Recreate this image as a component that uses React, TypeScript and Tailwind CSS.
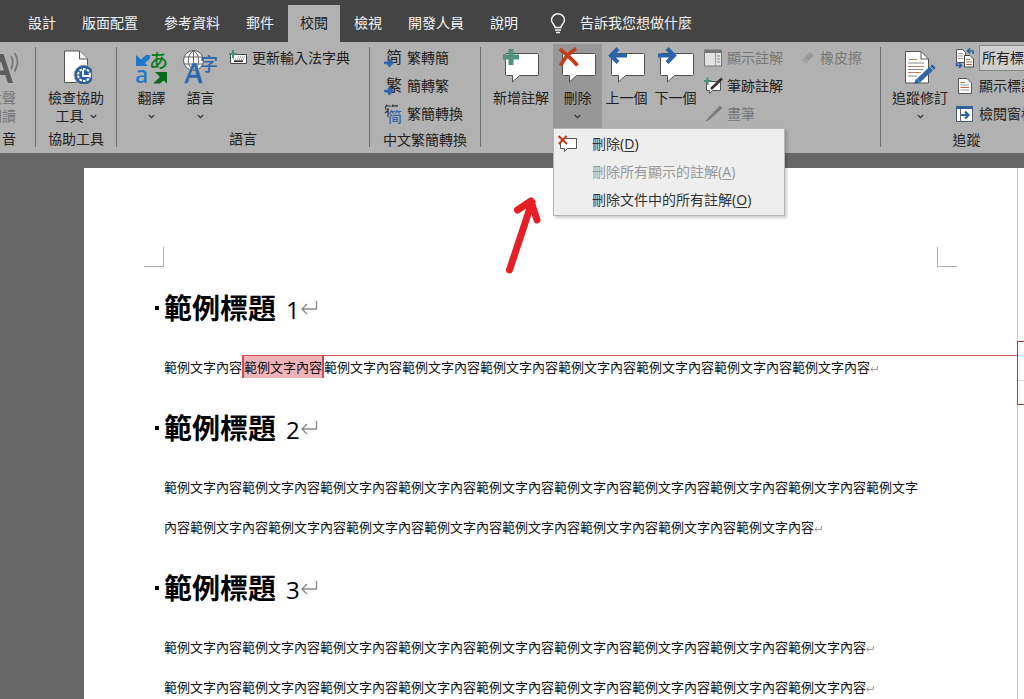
import type { ReactNode } from "react";

const UI_FONT = "font-['Noto_Sans','Noto_Sans_CJK_TC',sans-serif]";

const tabs = ["設計", "版面配置", "參考資料", "郵件", "校閱", "檢視", "開發人員", "說明"];
const activeTab = "校閱";

const sample = "範例文字內容";

/* ---------- icons ---------- */

function Chevron() {
  return (
    <svg width="7" height="5" viewBox="0 0 7 5" fill="none" stroke="#333" strokeWidth="1.2" aria-hidden="true">
      <path d="M0.8 1 L3.5 3.6 L6.2 1" />
    </svg>
  );
}

function ReadAloudIcon() {
  return (
    <svg width="40" height="38" viewBox="0 0 40 38" fill="none" aria-hidden="true">
      <path d="M6 37 L17 8 H21.5 L31 37 H26 L23.2 29 H13.5 L10.8 37 Z M15 24.6 H21.8 L19 15 Z" fill="#5e5e5e" fillRule="evenodd" />
      <path d="M29 10 Q32.5 16 29 23 M32.5 7 Q38.5 15.5 32.5 25.5" stroke="#777" strokeWidth="1.7" />
    </svg>
  );
}

function AccessibilityIcon() {
  return (
    <svg width="32" height="38" viewBox="0 0 32 38" fill="none" aria-hidden="true">
      <path d="M4.5 5 H19.5 L27.5 13 V36.5 H4.5 Z" fill="#fff" stroke="#555" />
      <path d="M19.5 5 V13 H27.5" fill="#eee" stroke="#555" />
      <circle cx="24" cy="29" r="10" fill="#2f5f9b" stroke="#b0b0b0" strokeWidth="0.8" />
      <circle cx="24" cy="29" r="6" stroke="#fff" strokeWidth="2" strokeDasharray="2.6 1.2" />
      <path d="M23 24 V30 H29" stroke="#fff" strokeWidth="1.8" />
    </svg>
  );
}

function TranslateIcon() {
  return (
    <svg width="34" height="38" viewBox="0 0 34 38" aria-hidden="true">
      <path d="M1 9 V20 H13 L10 17 L15 12.5 V9 H11 L6 13.5 Z" fill="#1f78c8" />
      <text x="14" y="22" fontSize="19" fontWeight="500" fill="#0b7a1e" fontFamily="Noto Sans CJK JP">あ</text>
      <text x="0" y="37" fontSize="23" fontWeight="500" fill="#1f78c8" fontFamily="Noto Sans">a</text>
      <path d="M20 26 H32 V37.5 L28.5 34.5 L25 37.5 H18 L25 31 Z" fill="#0b6b1a" />
    </svg>
  );
}

function LanguageIcon() {
  return (
    <svg width="36" height="38" viewBox="0 0 36 38" aria-hidden="true">
      <circle cx="10.5" cy="14.5" r="10" fill="#fff" stroke="#555" />
      <path d="M10.5 4.5 V24.5 M1 11 H20 M1 18 H20 M10.5 4.5 C3.5 9 3.5 20 10.5 24.5 M10.5 4.5 C17.5 9 17.5 20 10.5 24.5" fill="none" stroke="#555" strokeWidth="0.9" />
      <path d="M1 37.5 L9.4 17 H13.6 L20 37.5 H15.7 L14.1 32 H6.7 L4.9 37.5 Z M7.9 28.4 H12.9 L11 21 Z" fill="#2f66ad" stroke="#b0b0b0" strokeWidth="0.5" fillRule="evenodd" />
      <text x="17" y="25" fontSize="18" fontWeight="500" fill="#2f66ad" fontFamily="Noto Sans CJK TC">字</text>
    </svg>
  );
}

function DictionaryIcon() {
  return (
    <svg width="19" height="16" viewBox="0 0 19 16" fill="none" aria-hidden="true">
      <path d="M1.5 4.5 H17.5 V13.5 H1.5 Z" fill="#fff" stroke="#444" />
      <path d="M9 7 H16 M4 9 H16" stroke="#777" strokeDasharray="1 1" />
      <path d="M5 11.2 H14" stroke="#222" strokeWidth="1.6" />
      <path d="M4 0 V8 M0 4 H8" stroke="#4a8d72" strokeWidth="2" />
    </svg>
  );
}

function ConvertIcon({ glyph }: { glyph: string }) {
  return (
    <svg width="19" height="20" viewBox="0 0 19 20" aria-hidden="true">
      <text x="2" y="15" fontSize="16" fill="#222" fontFamily="Noto Sans CJK SC">{glyph}</text>
      <path d="M0 15 H7 M4.5 11.5 L8 15 L4.5 18.5" fill="none" stroke="#2f66ad" strokeWidth="2.6" />
    </svg>
  );
}

function ConvertBothIcon() {
  return (
    <svg width="19" height="20" viewBox="0 0 19 20" aria-hidden="true">
      <path d="M3 0.5 L1 4 M2 2 H7 M4 4.5 V13 M1 5 H5 M1 9 L4 6.5 M9 0.5 L8 3 M9 1.8 H14" fill="none" stroke="#333" strokeWidth="1.2" />
      <text x="4" y="18" fontSize="14" fontWeight="500" fill="#2f66ad" fontFamily="Noto Sans CJK SC">简</text>
    </svg>
  );
}

function CommentIcon({ children }: { children: ReactNode }) {
  return (
    <svg width="38" height="38" viewBox="0 0 38 38" fill="none" aria-hidden="true">
      <path d="M5 7.5 H35.5 Q36.5 7.5 36.5 8.5 V28.5 Q36.5 29.5 35.5 29.5 H17.5 L10.5 36 V29.5 H4.5 Q3.5 29.5 3.5 28.5 V8.5 Q3.5 7.5 5 7.5 Z" fill="#fff" stroke="#505050" />
      {children}
    </svg>
  );
}

function SmallDeleteIcon() {
  return (
    <svg width="20" height="18" viewBox="0 0 20 18" fill="none" aria-hidden="true">
      <path d="M6 3.5 H18.5 V13.5 H9.5 L6.5 16.5 V13.5 H2.5 V8" fill="#fff" stroke="#555" />
      <path d="M0.5 1 L9 9 M8.5 1 L0.8 9" stroke="#c43a1e" strokeWidth="2" />
    </svg>
  );
}

function ShowCommentsIcon() {
  return (
    <svg width="19" height="18" viewBox="0 0 19 18" fill="none" aria-hidden="true">
      <path d="M0.5 1 H17.5 V17 H0.5 Z" fill="#e2e2e2" stroke="#777" />
      <path d="M0.5 2.5 H17.5" stroke="#777" strokeWidth="3" />
      <path d="M11.5 4 V17" stroke="#999" />
      <path d="M13 7 H16 M13 10 H16 M13 13 H16" stroke="#888" />
    </svg>
  );
}

function InkCommentIcon() {
  return (
    <svg width="19" height="18" viewBox="0 0 19 18" fill="none" aria-hidden="true">
      <path d="M2.5 4.5 H16.5 V13.5 H8.5 L5.5 16.5 V13.5 H2.5 Z" fill="#fff" stroke="#555" />
      <path d="M3.5 0.5 V8 M0 4 H7.5" stroke="#4a8d72" strokeWidth="2" />
      <path d="M7 12 L18 1.5" stroke="#333" strokeWidth="2.6" />
    </svg>
  );
}

function PenIcon() {
  return (
    <svg width="19" height="18" viewBox="0 0 19 18" fill="none" aria-hidden="true">
      <path d="M2 16 L5 12.5 L16 1 L18 3 L6.5 13.5 Z" fill="#7c7c7c" stroke="#7c7c7c" />
    </svg>
  );
}

function EraserIcon() {
  return (
    <svg width="15" height="16" viewBox="0 0 15 16" aria-hidden="true">
      <path d="M1 10 L9 2 L13 5.5 L5 13.5 Z" fill="#989898" />
      <path d="M1 10 L3.5 7.5 L7.5 11 L5 13.5 Z" fill="#a4a4a4" />
    </svg>
  );
}

function TrackIcon() {
  return (
    <svg width="32" height="38" viewBox="0 0 32 38" fill="none" aria-hidden="true">
      <path d="M1.5 5.5 H17 L24.5 13 V37 H1.5 Z" fill="#fff" stroke="#555" />
      <path d="M17 5.5 V13 H24.5" stroke="#555" />
      <path d="M5 13.5 H13 M4 20.5 H20 M4 26.5 H17" stroke="#c27c66" />
      <path d="M4 17 H20 M4 23.5 H19 M4 30 H13" stroke="#888" />
      <path d="M14.5 34.5 L30 20" stroke="#2f66a5" strokeWidth="5" />
      <path d="M26 20.5 L29.5 24.5" stroke="#bcd" />
      <path d="M12 32.5 L10 38 L16.5 36.5 Z" fill="#2f66a5" />
    </svg>
  );
}

function MarkupModeIcon() {
  return (
    <svg width="20" height="20" viewBox="0 0 20 20" fill="none" aria-hidden="true">
      <path d="M1.5 1.5 H7.5 L10.5 4.5 V14.5 H1.5 Z" fill="#fff" stroke="#555" />
      <path d="M3 5.5 H8 M3 8 H8 M3 10.5 H8" stroke="#999" />
      <path d="M9.5 7.5 H15 L18.5 11 V19 H9.5 Z" fill="#fff" stroke="#444" />
      <path d="M11 11.5 H15 M11 14 H17 M11 16.5 H17" stroke="#c4603e" />
      <path d="M18 6 V3 H13 M15 0.5 L12.5 3 L15 5.5 M1.5 15 V17.5 H6 M4 15 L6.5 17.5 L4 20" stroke="#2f5fa0" strokeWidth="1.6" />
    </svg>
  );
}

function ShowMarkupIcon() {
  return (
    <svg width="20" height="18" viewBox="0 0 20 18" fill="none" aria-hidden="true">
      <path d="M3.5 1.5 H12 L16.5 6 V16.5 H3.5 Z" fill="#fff" stroke="#555" />
      <path d="M5.5 5.5 H10 M5.5 10.5 H14" stroke="#c4603e" />
      <path d="M5.5 8 H14 M5.5 13 H14" stroke="#999" />
    </svg>
  );
}

function ReviewPaneIcon() {
  return (
    <svg width="20" height="18" viewBox="0 0 20 18" fill="none" aria-hidden="true">
      <path d="M1.5 1.5 H17.5 V16.5 H1.5 Z" fill="#fff" stroke="#4a5c75" />
      <path d="M1 2.5 H18" stroke="#2f5fa0" strokeWidth="3" />
      <path d="M5.5 4 V16" stroke="#666" />
      <path d="M6 10 H13 M10 6.5 L13.5 10 L10 13.5" stroke="#2f5fa0" strokeWidth="2.2" />
    </svg>
  );
}

function BulbIcon() {
  return (
    <svg width="16" height="21" viewBox="0 0 16 21" fill="none" stroke="#f2f2f2" strokeWidth="1.5" aria-hidden="true">
      <path d="M5 14.5 C5 11.5 1.5 10.5 1.5 7 A6.5 6.2 0 0 1 14.5 7 C14.5 10.5 11 11.5 11 14.5 Z" />
      <path d="M5 17 H11 M6 19.5 H10" />
    </svg>
  );
}

function ReturnMark({ large = false }: { large?: boolean }) {
  return (
    <svg
      className="inline-block"
      width={large ? 18 : 8}
      height={large ? 16 : 8}
      viewBox="0 0 18 16"
      fill="none"
      stroke="#8a8a8a"
      strokeWidth={large ? 1.4 : 2}
      aria-hidden="true"
    >
      <path d="M16.5 1 V9 H2 M7 4 L2 9 L7 14" />
    </svg>
  );
}

/* ---------- ribbon parts ---------- */

function Separator() {
  return <span className="mt-[3px] w-px bg-[#6f6f6f]" />;
}

function Group({ label, className = "", children }: { label?: string; className?: string; children: ReactNode }) {
  return (
    <section className={`flex flex-none pb-[6px] ${className}`}>
      <div className="flex min-w-0 flex-1 flex-col">
        <div className="flex h-[84px] justify-center">{children}</div>
        <h2 className="flex h-5 items-center justify-center whitespace-nowrap pt-1">{label}</h2>
      </div>
      <Separator />
    </section>
  );
}

function BigButton({
  icon,
  lines,
  menu = false,
  className = "w-[49px]",
}: {
  icon: ReactNode;
  lines: string[];
  menu?: boolean;
  className?: string;
}) {
  return (
    <button type="button" className={`flex h-full flex-none flex-col items-center leading-[18px] whitespace-nowrap ${className}`}>
      <span className="flex h-[45px] flex-none items-start justify-center pt-[2px]">{icon}</span>
      <span>{lines[0]}</span>
      <span className="flex h-[18px] items-center gap-[6px]">
        {lines[1]}
        {menu && <Chevron />}
      </span>
    </button>
  );
}

function SmallButton({ icon, label, disabled = false }: { icon: ReactNode; label: string; disabled?: boolean }) {
  return (
    <button type="button" disabled={disabled} className="flex h-7 flex-none items-center gap-1 whitespace-nowrap disabled:text-[#777]">
      {icon}
      {label}
    </button>
  );
}

function DeleteMenu() {
  const items = [
    { text: "刪除", accel: "D", icon: <SmallDeleteIcon />, disabled: false },
    { text: "刪除所有顯示的註解", accel: "A", icon: null, disabled: true },
    { text: "刪除文件中的所有註解", accel: "O", icon: null, disabled: false },
  ];
  return (
    <ul className="absolute top-full left-0 z-20 w-[232px] border border-[#b4b4b4] bg-[#eeeeee] py-px text-[#333] shadow-[2px_2px_3px_rgba(0,0,0,0.2)]">
      {items.map((item) => (
        <li key={item.accel}>
          <button type="button" disabled={item.disabled} className="flex h-7 w-full items-center whitespace-nowrap disabled:text-[#999]">
            <span className="flex w-[38px] pl-1">{item.icon}</span>
            <span>
              {item.text}(<u className="underline-offset-2">{item.accel}</u>)
            </span>
          </button>
        </li>
      ))}
    </ul>
  );
}

/* ---------- document parts ---------- */

function Heading({ n }: { n: number }) {
  return (
    <h1 className="flex h-20 items-center pt-[2px] pl-[71px] text-[28px] font-bold text-black">
      <span className="mr-[5px] h-1 w-1 bg-black" />
      範例標題
      <span className="pt-1 pl-[10px] font-['Open_Sans',sans-serif] text-2xl font-medium">{n}</span>
      <ReturnMark large />
    </h1>
  );
}

function Body({ children }: { children: ReactNode }) {
  return (
    <p className="relative pl-20 leading-10">
      <span className="block max-w-[766px]">
        {children}
        <ReturnMark />
      </span>
    </p>
  );
}

export default function App() {
  return (
    <div className={`flex h-screen flex-col overflow-hidden bg-[#666] text-sm text-[#222] ${UI_FONT}`}>
      <header className="flex h-[42px] flex-none items-end bg-[#444] pl-4 text-[#f2f2f2]">
        <nav className="flex gap-[2px]">
          {tabs.map((tab) => (
            <button
              key={tab}
              type="button"
              className={`h-[37px] px-3 pb-[2px] whitespace-nowrap ${tab === activeTab ? "bg-[#b1b1b1] text-[#222]" : ""}`}
            >
              {tab}
            </button>
          ))}
        </nav>
        <button type="button" className="ml-5 flex h-[38px] items-center gap-[14px] whitespace-nowrap">
          <BulbIcon />
          告訴我您想做什麼
        </button>
      </header>

      <div className="relative z-10 flex h-[111px] flex-none bg-[#b1b1b1] pt-[2px]">
        <section className="flex w-9 flex-none pb-[6px]">
          <div className="flex min-w-0 flex-1 flex-col">
            <div className="flex h-[84px] w-[22px] justify-end text-[#777]">
              <BigButton icon={<ReadAloudIcon />} lines={["大聲", "朗讀"]} className="w-10" />
            </div>
            <h2 className="flex h-5 w-4 items-center justify-end pt-1">音</h2>
          </div>
          <Separator />
        </section>

        <Group label="協助工具" className="w-[81px]">
          <BigButton icon={<AccessibilityIcon />} lines={["檢查協助", "工具"]} menu className="w-16" />
        </Group>

        <Group label="語言" className="w-[253px]">
          <div className="flex flex-1 pl-[10px]">
            <BigButton icon={<TranslateIcon />} lines={["翻譯"]} menu />
            <BigButton icon={<LanguageIcon />} lines={["語言"]} menu />
            <div className="pl-1">
              <SmallButton icon={<DictionaryIcon />} label="更新輸入法字典" />
            </div>
          </div>
        </Group>

        <Group label="中文繁簡轉換" className="w-[111px]">
          <div className="flex flex-1 flex-col pl-[14px]">
            <SmallButton icon={<ConvertIcon glyph="简" />} label="繁轉簡" />
            <SmallButton icon={<ConvertIcon glyph="繁" />} label="簡轉繁" />
            <SmallButton icon={<ConvertBothIcon />} label="繁簡轉換" />
          </div>
        </Group>

        <Group className="w-[400px]">
          <div className="flex flex-1 pl-[8px]">
            <BigButton
              className="w-16"
              lines={["新增註解"]}
              icon={
                <CommentIcon>
                  <path d="M9 3 V19 M1 11 H17" stroke="#4f9278" strokeWidth="5" />
                </CommentIcon>
              }
            />
            <div className="relative h-full flex-none bg-[#979797]">
              <BigButton
                menu
                lines={["刪除"]}
                icon={
                  <CommentIcon>
                    <path d="M0.5 3 Q9 9 18.5 19.5 M17 2.5 Q7 9 1.5 19.5" stroke="#c23d1c" strokeWidth="3.8" />
                  </CommentIcon>
                }
              />
              <DeleteMenu />
            </div>
            <BigButton
              lines={["上一個"]}
              icon={
                <CommentIcon>
                  <path d="M3 9.5 H19 M10 2.5 L3 9.5 L10 16.5" stroke="#2b62a8" strokeWidth="4" />
                </CommentIcon>
              }
            />
            <BigButton
              lines={["下一個"]}
              icon={
                <CommentIcon>
                  <path d="M1 9.5 H17 M10 2.5 L17 9.5 L10 16.5" stroke="#2b62a8" strokeWidth="4" />
                </CommentIcon>
              }
            />
            <div className="flex flex-col pl-1">
              <SmallButton icon={<ShowCommentsIcon />} label="顯示註解" disabled />
              <SmallButton icon={<InkCommentIcon />} label="筆跡註解" />
              <SmallButton icon={<PenIcon />} label="畫筆" disabled />
            </div>
            <div className="pl-[18px]">
              <SmallButton icon={<EraserIcon />} label="橡皮擦" disabled />
            </div>
          </div>
        </Group>

        <Group label="追蹤" className="w-[172px]">
          <div className="flex flex-1 pl-[7px]">
            <BigButton className="w-16" icon={<TrackIcon />} lines={["追蹤修訂"]} menu />
            <div className="flex flex-col pl-[3px]">
              <label className="flex h-7 items-center gap-1">
                <MarkupModeIcon />
                <select
                  aria-label="標記顯示方式"
                  className="h-[26px] w-[72px] appearance-none border border-[#888] bg-[#cfcfcf] pl-[2px]"
                >
                  <option>所有標記</option>
                </select>
              </label>
              <SmallButton icon={<ShowMarkupIcon />} label="顯示標記" />
              <SmallButton icon={<ReviewPaneIcon />} label="檢閱窗格" />
            </div>
          </div>
        </Group>
      </div>

      <main className="relative mt-[15px] ml-[84px] flex min-h-0 flex-1 overflow-hidden bg-white text-[13px] text-[#111]">
        <article className="min-w-0 flex-1 border-r border-[#c8c8c8] pt-[79px]">
          <div className="ml-[60px] flex h-5 max-w-[813px] justify-between">
            <span className="w-5 border-r border-b border-[#b0b0b0]" />
            <span className="w-5 border-b border-l border-[#b0b0b0]" />
          </div>
          <Heading n={1} />
          <Body>
            {sample}
            <mark className="border-x-2 border-[#cf4a54] bg-[#eeb4b8] py-[2px] text-inherit">{sample}</mark>
            {sample.repeat(7)}
            <span className="absolute top-2 right-0 left-[158px] border-t border-[#d0504f]" />
          </Body>
          <Heading n={2} />
          <Body>{sample.repeat(18)}</Body>
          <Heading n={3} />
          <Body>{sample.repeat(9)}</Body>
          <Body>{sample.repeat(9)}</Body>
        </article>
        <aside className="w-[6px] flex-none pt-[173px]">
          <div className="-ml-px h-16 border-y border-l border-[#b23a3f]">
            <div className="h-[39px] border-b border-[#ddd]" />
          </div>
        </aside>
        <svg className="absolute top-[25px] left-[418px]" width="44" height="84" viewBox="0 0 44 84" fill="none" aria-hidden="true">
          <path d="M7.5 77 L30 9 M15.5 17 L29 8 L35 27" stroke="#e61e25" strokeWidth="7" strokeLinecap="round" strokeLinejoin="round" />
        </svg>
      </main>
    </div>
  );
}
